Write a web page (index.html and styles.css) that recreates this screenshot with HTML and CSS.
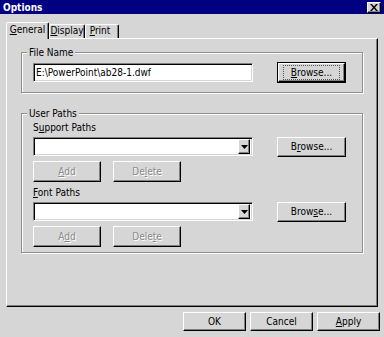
FILE: index.html
```html
<!DOCTYPE html>
<html>
<head>
<meta charset="utf-8">
<link rel="stylesheet" href="styles.css">
</head>
<body>
<div class="window">
  <div class="titlebar">
    <span class="title">Options</span>
    <span class="close"><svg width="8" height="7" viewBox="0 0 8 7"><path d="M0 0h2l2 2.5 2-2.5h2l-3 3.5 3 3.5h-2l-2-2.5-2 2.5h-2l3-3.5z" fill="#000"/></svg></span>
  </div>
  <div class="tabs">
    <div class="tab active"><span class="focus"><u>G</u>eneral</span></div>
    <div class="tab tab-display"><u>D</u>isplay</div>
    <div class="tab tab-print"><u>P</u>rint</div>
  </div>
  <div class="panel">
    <div class="group group-file">
      <span class="legend">File Name</span>
      <div class="row">
        <div class="field">E:\PowerPoint\ab28-1.dwf</div>
        <div class="btn browse default"><span class="focus"><u>B</u>rowse...</span></div>
      </div>
    </div>
    <div class="group group-user">
      <span class="legend">User Paths</span>
      <div class="label">S<u>u</u>pport Paths</div>
      <div class="row">
        <div class="field combo"><span class="drop"><svg width="7" height="4" viewBox="0 0 7 4"><path d="M0 0h7L3.5 4z" fill="#000"/></svg></span></div>
        <div class="btn browse">B<u>r</u>owse...</div>
      </div>
      <div class="btnrow">
        <div class="btn small disabled"><u>A</u>dd</div>
        <div class="btn small disabled">De<u>l</u>ete</div>
      </div>
      <div class="label label2"><u>F</u>ont Paths</div>
      <div class="row">
        <div class="field combo"><span class="drop"><svg width="7" height="4" viewBox="0 0 7 4"><path d="M0 0h7L3.5 4z" fill="#000"/></svg></span></div>
        <div class="btn browse">Brow<u>s</u>e...</div>
      </div>
      <div class="btnrow">
        <div class="btn small disabled">A<u>d</u>d</div>
        <div class="btn small disabled">Dele<u>t</u>e</div>
      </div>
    </div>
  </div>
  <div class="footer">
    <div class="btn foot">OK</div>
    <div class="btn foot">Cancel</div>
    <div class="btn foot"><u>A</u>pply</div>
  </div>
</div>
</body>
</html>
```
FILE: styles.css
```css
*, *::before, *::after { box-sizing: border-box; }
html, body {
  margin: 0;
  padding: 0;
  background: #d6d6d6;
}
.window {
  width: 384px;
  height: 337px;
  background: #d6d6d6;
  font-family: "Liberation Sans Narrow", "DejaVu Sans Condensed", "Liberation Sans", Arial, sans-serif;
  font-size: 10px;
  color: #000;
  display: flex;
  flex-direction: column;
  overflow: hidden;
}
u { text-decoration: underline; text-underline-offset: 1px; }
.titlebar {
  height: 14px;
  flex: none;
  background: #000080;
  display: flex;
  align-items: center;
  justify-content: space-between;
  padding: 0 3px 0 3px;
}
.title {
  color: #fff;
  font-weight: bold;
  font-size: 10px;
  line-height: 13px;
}
.close {
  width: 14px;
  height: 11px;
  background: #d6d6d6;
  border-top: 1px solid #fff;
  border-left: 1px solid #fff;
  border-right: 1px solid #000;
  border-bottom: 1px solid #000;
  box-shadow: inset -1px -1px 0 #808080;
  display: flex;
  align-items: center;
  justify-content: center;
}
.tabs {
  display: flex;
  align-items: flex-end;
  margin: 8px 0 0 6px;
  height: 16px;
  flex: none;
  position: relative;
  z-index: 1;
}
.tab {
  height: 14px;
  line-height: 12px;
  border-top: 1px solid #fff;
  border-left: 1px solid #fff;
  border-right: 1px solid #000;
  box-shadow: inset -1px 0 0 #808080;
  border-radius: 2px 2px 0 0;
  text-align: center;
  background: #d6d6d6;
}
.tab.active {
  width: 43px;
  height: 17px;
  margin-bottom: -1px;
  padding-top: 1px;
}
.tab.active .focus {
  display: inline-block;
  line-height: 11px;
}
.tab-display { width: 36px; }
.tab-print { width: 34px; padding-right: 4px; }
.panel {
  margin: 0 6px 0 6px;
  height: 269px;
  flex: none;
  border-top: 1px solid #fff;
  border-left: 1px solid #fff;
  border-right: 1px solid #000;
  border-bottom: 1px solid #000;
  box-shadow: inset -1px -1px 0 #808080;
  padding: 13px 14px 0 14px;
}
.group {
  position: relative;
  border: 1px solid #8e8e8e;
  box-shadow: 1px 1px 0 #fff, inset 1px 1px 0 #fff;
  padding: 0 16px 0 11px;
}
.legend {
  position: absolute;
  top: -7px;
  left: 5px;
  line-height: 13px;
  padding: 0 2px;
  background: #d6d6d6;
}
.group-file {
  height: 41px;
  padding-top: 9px;
}
.group-user {
  margin-top: 20px;
  height: 140px;
  padding-top: 7px;
}
.row {
  display: flex;
  align-items: center;
  justify-content: space-between;
  height: 21px;
}
.label {
  line-height: 13px;
  margin-bottom: 2px;
}
.label2 { margin-top: 4px; }
.field {
  width: 220px;
  height: 19px;
  background: #fff;
  border-top: 1px solid #808080;
  border-left: 1px solid #808080;
  border-right: 1px solid #fff;
  border-bottom: 1px solid #fff;
  box-shadow: inset 1px 1px 0 #000, inset -1px -1px 0 #d6d6d6;
  padding: 1px 0 0 2px;
  line-height: 14px;
  white-space: nowrap;
  display: flex;
  align-items: center;
}
.combo {
  padding: 2px 2px 2px 2px;
  justify-content: flex-end;
}
.drop {
  width: 12px;
  height: 15px;
  background: #d6d6d6;
  border-top: 1px solid #fff;
  border-left: 1px solid #fff;
  border-right: 1px solid #000;
  border-bottom: 1px solid #000;
  box-shadow: inset -1px -1px 0 #808080;
  display: flex;
  align-items: center;
  justify-content: center;
}
.btn {
  background: #d6d6d6;
  border-top: 1px solid #fff;
  border-left: 1px solid #fff;
  border-right: 1px solid #000;
  border-bottom: 1px solid #000;
  box-shadow: inset -1px -1px 0 #808080;
  display: flex;
  align-items: center;
  justify-content: center;
  line-height: 13px;
}
.browse {
  width: 69px;
  height: 20px;
}
.browse.default {
  outline: 1px solid #000;
  height: 19px;
  width: 67px;
  margin-right: 1px;
}
.browse .focus {
  outline: 1px dotted #555;
  outline-offset: 0;
  padding: 1px 7px 0 7px;
  line-height: 12px;
}
.btnrow {
  display: flex;
  gap: 12px;
  margin-top: 4px;
}
.small {
  width: 68px;
  height: 21px;
}
.disabled {
  color: #8a8a8a;
  text-shadow: 1px 1px 0 #fff;
}
.footer {
  display: flex;
  justify-content: flex-end;
  gap: 4px;
  margin: 5px 4px 0 0;
}
.foot {
  width: 63px;
  height: 19px;
}
```
